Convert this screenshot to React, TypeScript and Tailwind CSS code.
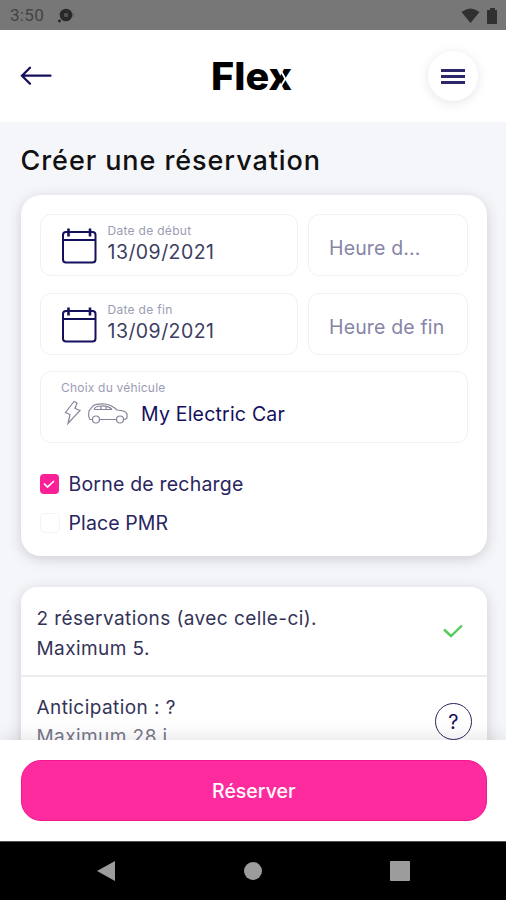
function Calendar() {
  return (
    <svg width="36" height="36" viewBox="0 0 36 36" fill="none" stroke="#15105c" strokeWidth="2" className="shrink-0">
      <rect x="2" y="4" width="32.500" height="30.500" rx="3" />
      <path d="M2 12H34.500" />
      <path d="M7.500 0.500V8.500M29 0.500V8.500" strokeWidth="2.600" />
    </svg>
  );
}

function DateField({ label }: { label: string }) {
  return (
    <div className="flex h-[62px] w-[258px] items-center rounded-[11px] border-[1.5px] border-[#f1f1f4] pl-[20px] pt-px">
      <Calendar />
      <div className="-mt-[4px] ml-[11px] flex flex-col">
        <span className="text-[12px] leading-[14px] tracking-[0.3px] text-[#9b9cb3]">{label}</span>
        <span className="mt-[2px] text-[19.5px] leading-[24px] tracking-[0.45px] text-[#3d3e62]">13/09/2021</span>
      </div>
    </div>
  );
}

function TimeField({ label }: { label: string }) {
  return (
    <div className="flex h-[62px] w-[160px] items-center rounded-[11px] border-[1.5px] border-[#f1f1f4] pl-[20px] pt-[8px] text-[19.5px] tracking-[0.15px] text-[#8586a6]">
      {label}
    </div>
  );
}

export default function App() {
  return (
    <div className="flex h-[900px] w-[506px] flex-col overflow-hidden bg-[#f5f6fa] font-['Inter',sans-serif]">
      <div className="flex h-[30px] shrink-0 items-center bg-[#777] pl-[10px] pr-[8px] pt-px">
        <span className="font-['Roboto',sans-serif] text-[17px] tracking-[0.3px] text-[#444]">3:50</span>
        <svg width="18" height="16" viewBox="0 0 18 16" className="ml-[13px]">
          <circle cx="9" cy="7" r="6.300" fill="#292929" />
          <rect x="7" y="5" width="4" height="4" rx="1" fill="#505050" />
          <circle cx="2.500" cy="13" r="1.400" fill="#222" />
          <path d="M16.300 5v4" stroke="#5a5a5a" />
        </svg>
        <svg width="37" height="18" viewBox="0 0 37 18" className="ml-auto" fill="#303030">
          <path d="M0.500 5Q9.500-2 18.500 5L9.500 16Z" />
          <path d="M26 3h3V1h5v2h2v14H26Z" />
        </svg>
      </div>

      <header className="flex h-[92px] shrink-0 items-center justify-between bg-white pl-[20px] pr-[28px]">
        <svg width="32" height="20" viewBox="0 0 32 20" fill="none" stroke="#15105c" strokeWidth="2.300">
          <path d="M30.500 9.700H2M10 1.700L2 9.700l8 8" strokeLinecap="round" />
        </svg>
        <svg width="88" height="48" viewBox="0 0 88 48" className="ml-[26px]">
          <text x="2" y="37.500" textLength="81" className="font-['Inter',sans-serif] text-[38px] font-extrabold" lengthAdjust="spacingAndGlyphs">
            Flex
          </text>
          <path d="M69.500 14.500L76.300 26.800L69 39" fill="none" stroke="#fff" strokeWidth="1.800" />
        </svg>
        <div className="flex size-[50px] items-center justify-center rounded-full bg-white shadow-[0_2px_12px_rgba(0,0,0,0.1)]">
          <div className="flex w-6 flex-col gap-[3px]">
            <div className="h-[3px] bg-[#2b2769]" />
            <div className="h-[3px] bg-[#2b2769]" />
            <div className="h-[3px] bg-[#2b2769]" />
          </div>
        </div>
      </header>

      <main className="min-h-0 flex-1 overflow-hidden pl-[20.5px] pr-[19px]">
        <h1 className="mt-[20px] h-[53px] text-[27px] leading-[37px] font-medium tracking-[0.93px] text-[#111]">Créer une réservation</h1>
        <section className="h-[361px] rounded-[20px] bg-white px-[19px] pt-[19px] shadow-[0_3px_14px_rgba(0,0,0,0.16)]">
          <div className="flex justify-between">
            <DateField label="Date de début" />
            <TimeField label="Heure d..." />
          </div>
          <div className="mt-[17px] flex justify-between">
            <DateField label="Date de fin" />
            <TimeField label="Heure de fin" />
          </div>
          <div className="mt-[16px] h-[72px] rounded-[11px] border-[1.5px] border-[#f1f1f4] pl-[20.5px] pt-[9px]">
            <div className="text-[12px] leading-[14px] tracking-[0.2px] text-[#9b9cb3]">Choix du véhicule</div>
            <div className="mt-[4px] flex items-center">
              <svg width="70" height="26" viewBox="0 0 70 26" fill="none" stroke="#85859a" strokeWidth="1.200">
                <path d="M13 1.500L4.500 12.500L9 14.500L7 23.500L19 10.500L14 8.500L16 3Z" />
                <path d="M31.500 19.500H29Q27 17 28 11L32 6Q35 3.500 44 4Q51 5 56 10Q65 10.500 66 14V17Q66 19 63 19.500M39 19.500H55M33 9.500H51M33 9.500Q34 6 40 6V9.500M40 6Q47 5.500 51 9.500M45 6V9.500" />
                <circle cx="35" cy="19.500" r="3.500" />
                <circle cx="59" cy="19.500" r="3.500" />
              </svg>
              <span className="ml-[10px] mt-[2px] text-[19.5px] leading-[26px] tracking-[0.2px] text-[#15105c]">My Electric Car</span>
            </div>
          </div>
          <div className="mt-[26px] flex h-[30px] items-center gap-[10px] text-[19.5px] tracking-[0.2px] text-[#29255f]">
            <span className="flex h-5 w-[19px] items-center justify-center rounded-[4px] bg-[#fb2097]">
              <svg width="12" height="9" viewBox="0 0 12 9" fill="none" stroke="white" strokeWidth="1.700">
                <path d="M1 3.500L4.500 7L11 1" />
              </svg>
            </span>
            <span className="pt-[2px]">Borne de recharge</span>
          </div>
          <div className="mt-[9px] flex h-[30px] items-center gap-[9px] text-[19.5px] tracking-[0.1px] text-[#29255f]">
            <span className="size-5 rounded-[5px] border border-[#f3f3f5]" />
            <span className="pt-[2px]">Place PMR</span>
          </div>
        </section>

        <section className="mt-[31px] h-[200px] rounded-[16px] bg-white text-[19px] leading-[30px] tracking-[0.43px] text-[#343458] shadow-[0_3px_14px_rgba(0,0,0,0.16)]">
          <div className="flex h-[90px] items-center justify-between border-b-2 border-[#ededf0] pl-[16px] pr-[24px]">
            <p className="pt-[5px] leading-[29.5px]">
              2 réservations (avec celle-ci).
              <br />
              Maximum 5.
            </p>
            <svg width="20" height="14" viewBox="0 0 20 14" fill="none" stroke="#55cb5a" strokeWidth="2.400">
              <path d="M1 5.500L8 12L19 1.500" />
            </svg>
          </div>
          <div className="flex h-[90px] items-center justify-between pl-[16px] pr-[15px]">
            <p className="leading-[29.5px]">
              Anticipation : ?
              <br />
              <span className="text-[#77778a]">Maximum 28 j</span>
            </p>
            <span className="-mt-px flex size-[37px] items-center justify-center rounded-full border-[1.5px] border-[#29255f] text-[20px] text-[#15105c]">?</span>
          </div>
        </section>
      </main>

      <footer className="relative flex h-[101px] shrink-0 items-center bg-white pl-[20.5px] pr-[19px] shadow-[0_-3px_18px_rgba(0,0,0,0.1)]">
        <button className="h-[61px] w-full rounded-[20px] border border-[#f21690] bg-[#fe2b9f] pt-[3px] text-[19.5px] font-medium text-white">Réserver</button>
      </footer>
      <nav className="flex h-[59px] shrink-0 items-center justify-between border-t border-[#555] bg-black pl-[96px] pr-[96px]">
        <svg width="20" height="22" viewBox="0 0 20 22" fill="#9c9c9c">
          <path d="M1 11L19 1V21Z" />
        </svg>
        <span className="size-[18px] rounded-full bg-[#9c9c9c]" />
        <span className="size-[20px] rounded-[1px] bg-[#9c9c9c]" />
      </nav>
    </div>
  );
}
